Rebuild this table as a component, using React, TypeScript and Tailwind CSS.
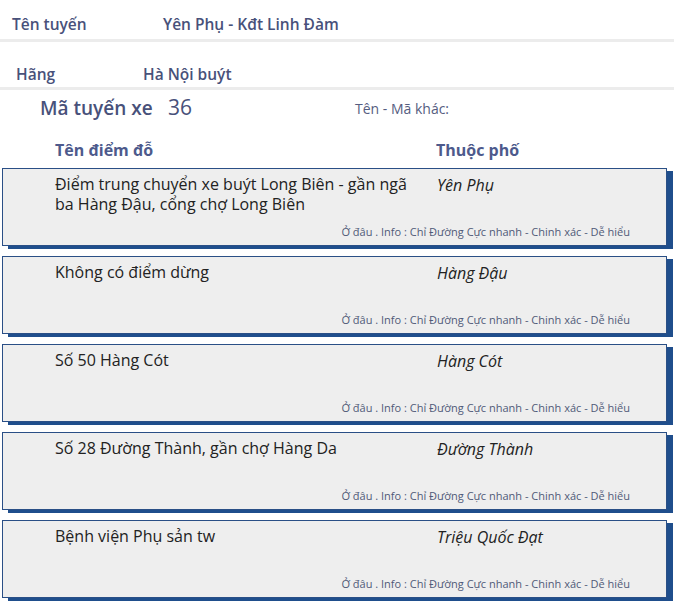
const stops = [
  {
    name: "Điểm trung chuyển xe buýt Long Biên - gần ngã ba Hàng Đậu, cổng chợ Long Biên",
    street: "Yên Phụ"
  },
  { name: "Không có điểm dừng", street: "Hàng Đậu" },
  { name: "Số 50 Hàng Cót", street: "Hàng Cót" },
  { name: "Số 28 Đường Thành, gần chợ Hàng Da", street: "Đường Thành" },
  { name: "Bệnh viện Phụ sản tw", street: "Triệu Quốc Đạt" }
];

export default function App() {
  return (
    <div className="w-[674px] h-[601px] overflow-hidden bg-white font-['Open_Sans','Noto_Sans',sans-serif]">
      {/* Route info */}
      <div className="h-[39px] flex items-end pb-[3px] text-[15.5px] text-[#48517a] font-semibold">
        <span className="pl-[12px] w-[163px]">Tên tuyến</span>
        <span>Yên Phụ - Kđt Linh Đàm</span>
      </div>
      <div className="h-[3px] bg-[#ececec]"></div>
      <div className="h-[45px] flex items-end pb-[1px] text-[15.5px] text-[#48517a] font-semibold">
        <span className="pl-[16px] w-[143px]">Hãng</span>
        <span>Hà Nội buýt</span>
      </div>
      <div className="h-[3px] bg-[#ececec]"></div>

      <div className="h-[36px] flex items-center text-[#48517a]">
        <span className="pl-[40px] w-[168px] text-[19px] font-semibold">Mã tuyến xe</span>
        <span className="w-[187px] text-[21px]">36</span>
        <span className="text-[14px] text-[#555d80]">Tên - Mã khác:</span>
      </div>

      {/* Column headers */}
      <div className="h-[42px] pt-[13px] flex text-[16px] leading-[22px] font-bold text-[#4d5a8c]">
        <span className="pl-[55px] w-[436px]">Tên điểm đỗ</span>
        <span>Thuộc phố</span>
      </div>

      <div className="flex flex-col gap-[10px] pl-[2px]">
        {stops.map((s, i) => (
          <div
            key={i}
            className="w-[665px] h-[78px] bg-[#eeeeee] border border-[#2a4f86] shadow-[6px_3px_0_#1f4e8c] flex flex-col"
          >
            <div className="flex flex-1 pt-[5px] text-[#222]">
              <div className="pl-[52px] w-[434px] pr-[24px] text-[16px] leading-[20px]">{s.name}</div>
              <div className="text-[16px] italic leading-[22px]">{s.street}</div>
            </div>
            <div className="text-right pr-[36px] pb-[5px] text-[11px] text-[#505a78]">
              Ở đâu . Info : Chỉ Đường Cực nhanh - Chinh xác - Dễ hiểu
            </div>
          </div>
        ))}
      </div>
    </div>
  );
}
